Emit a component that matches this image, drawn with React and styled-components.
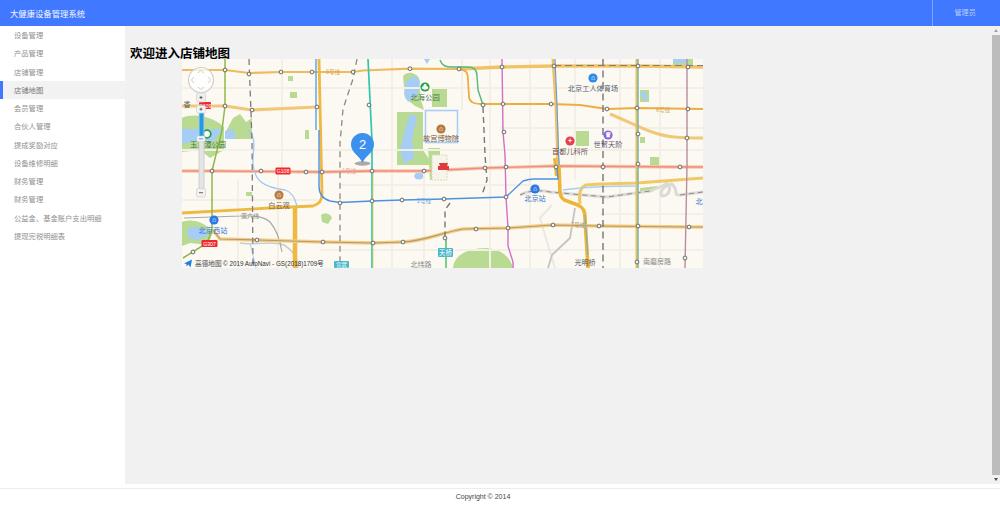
import React from 'react';
import styled, { createGlobalStyle } from 'styled-components';

const FONT = '"Liberation Sans", "Noto Sans CJK SC", sans-serif';
const MAPFONT = '"Noto Sans CJK SC", "Liberation Sans", sans-serif';

const Global = createGlobalStyle`
  html, body { margin: 0; padding: 0; height: 505px; overflow: hidden; background: #fff; }
  body { font-family: ${FONT}; }
  * { box-sizing: border-box; }
`;

const Page = styled.div`
  display: flex;
  flex-direction: column;
  width: 1000px;
  height: 505px;
`;
const Header = styled.header`
  display: flex;
  align-items: center;
  flex: 0 0 26px;
  background: #4079ff;
`;
const Brand = styled.div`
  flex: 1;
  padding-left: 10px;
  font-size: 8.35px;
  color: #f2f6ff;
`;
const UserBox = styled.div`
  width: 68px;
  height: 26px;
  border-left: 1.5px solid #7ea4ff;
  padding-left: 21.5px;
  line-height: 27px;
  font-size: 7.1px;
  color: #b8cdff;
`;
const Main = styled.div`
  display: flex;
  flex: 0 0 458px;
`;
const Sidebar = styled.nav`
  flex: 0 0 125px;
  background: #fff;
`;
const MenuItem = styled.div`
  height: 18.25px;
  line-height: 20px;
  padding-left: ${p => (p.$active ? 11 : 14)}px;
  font-size: 7.3px;
  color: ${p => (p.$active ? '#777' : '#8f8f8f')};
  background: ${p => (p.$active ? '#f2f2f2' : 'transparent')};
  border-left: ${p => (p.$active ? '3px solid #4079ff' : '0')};
`;
const Content = styled.main`
  flex: 1;
  background: #f1f1f1;
  padding: 20px 0 0 5px;
`;
const Title = styled.h1`
  margin: 0;
  font-size: 12.5px;
  line-height: 13px;
  font-weight: 700;
  color: #000;
  font-family: "Noto Sans CJK SC", sans-serif;
`;
const MapFrame = styled.div`
  width: 521px;
  height: 209px;
  margin-left: 52px;
  overflow: hidden;
  background: #fcf9f3;
  svg { display: block; }
`;
const ScrollBar = styled.div`
  display: flex;
  flex-direction: column;
  align-items: stretch;
  flex: 0 0 8px;
  background: #f1f1f1;
`;
const ScrollArrow = styled.div`
  flex: 0 0 9px;
  display: flex;
  align-items: center;
  justify-content: center;
  &::before {
    content: '';
    border-left: 2px solid transparent;
    border-right: 2px solid transparent;
    ${p => (p.$down ? 'border-top: 3px solid #505050;' : 'border-bottom: 3px solid #a3a3a3;')}
  }
`;
const ScrollThumb = styled.div`
  flex: 1;
  background: #bcbcbc;
`;
const Footer = styled.footer`
  margin-top: 4px;
  flex: 0 0 17px;
  border-top: 1px solid #ececec;
  border-bottom: 1px solid #ececec;
  padding-right: 34px;
  text-align: center;
  font-size: 7px;
  line-height: 16px;
  color: #444;
`;

const street = r => ({ d: `M${r[0]} ${r[1]}L${r[2]} ${r[3]}`, c: '#f3efe7', w: 2 });

const ROADS = [
  ...[[182,88,703,88],[182,150,703,150],[500,128,703,128],[340,185,540,185],[182,200,317,200],[600,214,703,214],[320,250,703,250]].map(street),
  ...[[282,59,282,170],[278,170,278,268],[392,59,392,268],[424,170,424,268],[462,59,462,110],[490,59,490,268],[530,59,530,268],[575,59,575,180],[620,59,620,268],[660,59,660,268],[238,180,238,268]].map(street),
  { d: 'M552 205L540 218L545 235L555 268', c: '#ece8e0', w: 2 },
  // grey rail
  { d: 'M520 195C530 190 540 190 550 192L583 195L607 197L650 191C660 187 668 184 666 183C672 186 670 196 662 196C658 190 668 184 672 184C680 192 672 195 680 195L703 192', c: '#dcdad5', w: 3 },
  { d: 'M520 195C530 190 540 190 550 192L583 195L607 197L650 191M680 195L703 192', c: '#8c8c8c', w: 1, dash: '5 4' },
  { d: 'M240 243C250 246 270 240 284 245C295 252 298 260 298 268', c: '#ccc', w: 1.6 },
  { d: 'M184 218L240 216C255 215 265 217 270 222C277 230 280 240 282 252', c: '#a9a9a9', w: 1.2 },
  { d: 'M575 208L570 238L552 255L548 268', c: '#c4c4c4', w: 1.8 },
  // rings
  { d: 'M182 70L225 70L249 73L281 72L353 72L363 70.5L410 68.7L459 69', c: '#eebb5f', w: 2.2 },
  { d: 'M459 69L502 67L554 66L638 66L703 67', c: '#f0c368', w: 3.4 },
  { d: 'M182 106L225 106L252 110L317 107', c: '#f2c878', w: 3.2 },
  { d: 'M459 69C466 70 468 72 468 80L469 97C470 103 475 104 483 104L551 104L580 105L607 109L637 108L703 109', c: '#ecae43', w: 1.8 },
  { d: 'M610 114C625 120 640 128 652 132C668 138 685 138 703 138', c: '#f0c878', w: 3 },
  { d: 'M182 171L212 171L322 172L372 171L424 171L485 168L556 166L680 167L703 167', c: '#f6c8a8', w: 3.4 },
  { d: 'M182 171L212 171L322 172L372 171L424 171L485 168L556 166L680 167L703 167', c: '#ee8e84', w: 1.4 },
  { d: 'M182 213L270 208L313 206C320 204 322 200 322 194L319 59', c: '#eeb942', w: 2.8 },
  { d: 'M295 208V268', c: '#edb93f', w: 4.5 },
  { d: 'M559 167L560 193C561 198 563 200 567 201L578 205C584 208 585 212 585 218L588 268', c: '#eeb433', w: 3.6 },
  { d: 'M556 158L558 176', c: '#eeb433', w: 6 },
  { d: 'M580 204C579 195 579 188 586 185C592 184 600 184 637 183L703 178', c: '#f2c866', w: 3.2 },
  { d: 'M213 230L220 239L257 240L323 242L373 243L403 242C425 241 440 233 463 229L508 228L553 225L599 226L689 227L703 227', c: '#f4cf83', w: 3.5 },
  { d: 'M213 230L220 239L257 240L323 242L373 243L403 242C425 241 440 233 463 229L508 228L553 225L599 226L689 227L703 227', c: '#b69a72', w: 1.2 },
  // metro
  { d: 'M225 59V106L222 130L212 171V230', c: '#8fb947', w: 1.5 },
  { d: 'M212 230L207 243L183 258', c: '#8fb947', w: 1.5 },
  { d: 'M440 60C442 66 446 67 452 67L468 67C474 67 477 70 477 76L478 90L483 105', c: '#52b97a', w: 1.4 },
  { d: 'M368 59L372 141V268', c: '#2fc7ae', w: 1.7 },
  { d: 'M373 170V268', c: '#f2c55e', w: 0.8 },
  { d: 'M502 59L503 132L505 155L506 197L508 228V246L513 262V268', c: '#d56ec5', w: 1.4 },
  { d: 'M553 59L556 105L558 165', c: '#f0c060', w: 3 },
  { d: 'M555 59L557 105L559 165', c: '#5f9ee6', w: 1.1 },
  { d: 'M637 59V268', c: '#efbe4c', w: 3 },
  { d: 'M638 59V268', c: '#56b8dc', w: 1.2 },
  { d: 'M687 59V165L685 268', c: '#b78e9e', w: 1.4 },
  { d: 'M446 238V268', c: '#4cbf6a', w: 1.5 },
  { d: 'M585 215L588 255', c: '#66b2e0', w: 1 },
  { d: 'M319 130V186C319 194 323 199 330 201L340 202.5L372 201L402 200L444 199L506 197L523 181C526 180 530 179 534 179L558 179L557 166', c: '#4d92e0', w: 1.4 },
  { d: 'M316 59V130', c: '#5b9fe8', w: 1.4 },
  { d: 'M248 130C258 140 252 150 253 165C255 180 262 187 285 190C292 192 295 198 297 206', c: '#9dc8f2', w: 1.3 },
  { d: 'M563 190C585 187 610 186 637 186', c: '#a5d0f2', w: 1.4 },
  { d: 'M250 243L256 268', c: '#a5d0f2', w: 1 },
  // dashed
  { d: 'M357 59L353 79L343 109L341 132L340 142V268', c: '#8b8b8b', w: 1.3, dash: '6 4.5' },
  { d: 'M249 59L252 140L253 268', c: '#7d7d7d', w: 1.3, dash: '6 4.5' },
  { d: 'M483 107L485 155L487 180L482 195', c: '#777', w: 1.4, dash: '6 4' },
  { d: 'M450 203L445 210V238', c: '#777', w: 1.4, dash: '6 4' },
  { d: 'M603 59V268', c: '#7e7e7e', w: 1.5, dash: '7 4.5' },
  { d: 'M554 65.5H703', c: '#7e7e7e', w: 1.2, dash: '7 4' },
];

const STATIONS = [
  [225,70],[249,74],[281,72],[312,72],[353,72],[225,106],[252,110],[317,107],[410,68.7],[459,69],[502,67],[554,66],[638,66],[688,67],
  [369,105],[483,105],[503,104],[551,104],[607,109],[637,108],[688,109],[504,132],[638,134],[687,138],
  [212,171],[261,171],[306,172],[322,172],[372,171],[424,171],[485,168],[506,167],[556,167],[603,167],[638,164],[680,167],
  [340,203],[372,201],[402,200],[444,199],[506,197],
  [257,240],[323,242],[373,243],[403,242],[445,238],[476,229],[508,228],[553,225],[599,226],[638,226],[689,227],
  [637,262],[685,258],[193,252],
];

const LABELS = [
  { x: 425, y: 100, t: '北海公园', s: 7.4, c: '#4f7f55' },
  { x: 441, y: 141, t: '故宫博物院', s: 7.2, c: '#7b5f45' },
  { x: 593, y: 91, t: '北京工人体育场', s: 7.2, c: '#4f5e70' },
  { x: 570, y: 154, t: '首都儿科所', s: 7.2, c: '#6d5050' },
  { x: 608, y: 147, t: '世贸天阶', s: 7.2, c: '#5d5670' },
  { x: 279, y: 208, t: '白云观', s: 7.2, c: '#7b5f45' },
  { x: 208, y: 147, t: '玉渊潭公园', s: 7.2, c: '#437a4e' },
  { x: 213, y: 233, t: '北京西站', s: 7.2, c: '#3a76cc' },
  { x: 535, y: 201, t: '北京站', s: 7.2, c: '#3a76cc' },
  { x: 585, y: 265, t: '光明桥', s: 7, c: '#555' },
  { x: 657, y: 264, t: '南磨房路', s: 7, c: '#8a8a8a' },
  { x: 421, y: 267, t: '北纬路', s: 7, c: '#8a8a8a' },
  { x: 250, y: 218, t: '莲六线', s: 6, c: '#8a8a8a' },
  { x: 424, y: 203, t: '2号线', s: 5.5, c: '#6fa3de' },
  { x: 578, y: 227, t: '7号线', s: 5.5, c: '#a99b85' },
  { x: 663, y: 112, t: '6号线', s: 5.5, c: '#d8a64a' },
  { x: 333, y: 74, t: '6号线', s: 5.5, c: '#dba34a' },
  { x: 349, y: 173, t: '1号线', s: 5.5, c: '#e7a79d' },
  { x: 699, y: 204, t: '北', s: 7.2, c: '#3a76cc' },
  { x: 187, y: 107, t: '香', s: 7, c: '#555' },
];

const POIS = [
  { x: 425, y: 87, c: '#27a043', g: '♣' },
  { x: 441, y: 129, c: '#b5793f', g: '⌂' },
  { x: 593, y: 78, c: '#2a8bea', g: '⌂' },
  { x: 570, y: 141, c: '#e6404f', g: '+' },
  { x: 608, y: 135, c: '#8a63dd', g: '♛' },
  { x: 535, y: 189, c: '#2b77e8', g: '⌂' },
  { x: 279, y: 195, c: '#bd7d42', g: '⌂' },
  { x: 214, y: 220, c: '#2b77e8', g: '⌂' },
];

const SHIELDS = [
  { x: 205, y: 105.5, w: 12, c: '#f0282d', t: 'G109' },
  { x: 283, y: 171, w: 15, c: '#f0282d', t: 'G108' },
  { x: 209.5, y: 243.5, w: 16, c: '#f0282d', t: 'G307' },
];

const PARKS = [
  'M403 76C408 70 416 73 419 78L421 100L424 110L415 106L405 98Z',
  'M432 89H447V107H432Z',
  'M397 112H423V150L433 165H397Z',
  'M428 148H440V180H430Z',
  'M182 118C195 112 215 118 224 127L224 150L210 158L200 150L182 152Z',
  'M225 133L233 118L240 114L246 122L252 118V139H225Z',
  'M182 222C192 218 205 222 213 232L208 245L190 243L182 246Z',
  'M453 268C454 255 468 248 486 248C500 249 510 256 513 268Z',
  'M575 131H589V146H575Z',
  'M321 215C325 212 331 214 332 218L328 224L322 222Z',
  'M246 192H252V196H246Z',
  'M650 157H660V166H650Z',
  'M640 137H645V143H640Z',
  'M640 90H649V102H640Z',
  'M288 76H293V81H288Z',
  'M290 92H297V98H290Z',
  'M305 130H309V139H305Z',
  'M640 188L658 186L652 192L640 193Z',
  'M673 59H693V67H673Z',
];

const WATERS = [
  'M406 82C412 74 418 76 420 82L417 96L408 102L404 94Z',
  'M410 114L417 116L412 140L414 158L404 164L400 150L405 130Z',
  'M182 129H223L214 141L195 141L182 144Z',
  'M225 131L233 129L236 139H225Z',
  'M187 229C192 226 202 226 208 231L206 237L196 240L189 238Z',
  'M424 59h6l-3 5z',
  'M640 93l5 -2 3 8 -4 2z',
  'M673 59H687V63H673Z',
];

const CityMap = () => (
  <svg width="521" height="209" viewBox="182 59 521 209" aria-label="店铺地图">
    <rect x="182" y="59" width="521" height="209" fill="#fcf9f3" />
    <g fill="#b9da92">{PARKS.map((d, i) => <path key={i} d={d} />)}</g>
    <g fill="#a6cdf6">
      {WATERS.map((d, i) => <path key={i} d={d} />)}
      <ellipse cx="419" cy="176" rx="5" ry="3.5" />
    </g>
    {ROADS.map((r, i) => (
      <path key={i} d={r.d} fill="none" stroke={r.c} strokeWidth={r.w} strokeDasharray={r.dash} strokeLinejoin="round" />
    ))}
    <rect x="425.5" y="110.5" width="32" height="32" fill="#fcf9f3" stroke="#a9ccf6" strokeWidth="1.6" />
    <rect x="432" y="155" width="15" height="25" fill="#f7f4ec" stroke="#cfe3ab" strokeWidth="1" strokeDasharray="2 1" />
    {STATIONS.map(([x, y], i) => (
      <circle key={i} cx={x} cy={y} r="1.9" fill="#f4f4f0" stroke="#5d5d5d" strokeWidth="0.9" />
    ))}
    {POIS.map((p, i) => (
      <g key={i}>
        <circle cx={p.x} cy={p.y} r="4.6" fill={p.c} />
        <text x={p.x} y={p.y + 2.4} textAnchor="middle" fontSize="7" fontWeight="700" fill="#fff" fontFamily={MAPFONT}>{p.g}</text>
      </g>
    ))}
    <circle cx="207" cy="134" r="3.8" fill="#fff" stroke="#27a043" strokeWidth="1.8" />
    <g textAnchor="middle" fontFamily={MAPFONT}>
      {LABELS.map((l, i) => (
        <text key={i} x={l.x} y={l.y} fontSize={l.s} fill={l.c}>{l.t}</text>
      ))}
    </g>
    <path d="M443 163h-4l1 3h-2v4h11v-4h-2l1 -3z" fill="#e23a3a" />
    {SHIELDS.map((s, i) => (
      <g key={i}>
        <rect x={s.x - s.w / 2} y={s.y - 3.6} width={s.w} height="7.2" rx="1" fill={s.c} />
        <text x={s.x} y={s.y + 2} textAnchor="middle" fontSize="5.2" fill="#fff" fontFamily={FONT}>{s.t}</text>
      </g>
    ))}
    <rect x="438" y="248" width="15" height="9" rx="1" fill="#49b8cb" />
    <text x="445.5" y="255" textAnchor="middle" fontSize="6.4" fill="#fff" fontFamily={MAPFONT}>天桥</text>
    <rect x="334" y="261" width="15" height="7" rx="1" fill="#49b8cb" />
    <text x="341.5" y="267" textAnchor="middle" fontSize="5.6" fill="#fff" fontFamily={MAPFONT}>宣武</text>

    {/* pan control */}
    <circle cx="201" cy="80" r="12.5" fill="#fff" fillOpacity="0.75" stroke="#cfcfcf" strokeWidth="1.2" />
    <path d="M198 73l3 -2.6 3 2.6M198 87l3 2.6 3 -2.6M194 77l-2.6 3 2.6 3M208 77l2.6 3 -2.6 3" fill="none" stroke="#d0d0d0" strokeWidth="1" />
    {/* zoom control */}
    <rect x="199" y="110" width="5" height="84" fill="#e4e4e4" stroke="#c8c8c8" strokeWidth="0.8" />
    <rect x="199.4" y="110" width="4.2" height="28" fill="#1e9be8" />
    <rect x="196.5" y="93" width="9" height="9" rx="1.5" fill="#eee" stroke="#d2d2d2" strokeWidth="0.7" />
    <path d="M199.5 97.5h3M201 96v3" stroke="#555" strokeWidth="0.9" />
    <rect x="196.5" y="105.5" width="9" height="7.5" rx="1.5" fill="#f3f3f3" stroke="#d2d2d2" strokeWidth="0.7" />
    <path d="M199.5 109.2h3M201 107.7v3" stroke="#555" strokeWidth="0.9" />
    <rect x="197" y="136" width="8" height="5.5" rx="1" fill="#f5f5f5" stroke="#cfcfcf" strokeWidth="0.6" />
    <path d="M199 138.8h4" stroke="#4aa3e6" strokeWidth="1" />
    <rect x="196.5" y="188.5" width="9" height="8.5" rx="1.5" fill="#f2f2f2" stroke="#cfcfcf" strokeWidth="0.7" />
    <path d="M199 192.7h4" stroke="#666" strokeWidth="1" />

    {/* logo and copyright */}
    <path d="M184 263.5L192 259.5L190.5 267.5L188.5 264.5L186.5 266.5L186.5 264Z" fill="#1d7fe0" />
    <text x="195" y="265.5" fontSize="6.7" fill="#4a4a4a" fontFamily={MAPFONT}>高德地图</text>
    <text x="223" y="265.5" fontSize="6.3" fill="#333" fontFamily={FONT}>© 2019 AutoNavi - GS(2018)1709号</text>

    {/* marker */}
    <ellipse cx="362.5" cy="163.5" rx="8" ry="2.2" fill="#6b6b6b" fillOpacity="0.55" />
    <path d="M362.5 163C360 156 351 153 351 144.5A11.5 11.5 0 1 1 374 144.5C374 153 365 156 362.5 163Z" fill="#3c90ee" />
    <text x="362.5" y="149" textAnchor="middle" fontSize="13" fill="#fff" fontFamily={FONT}>2</text>
  </svg>
);

const MENU = ['设备管理','产品管理','店铺管理','店铺地图','会员管理','合伙人管理','提成奖励对应','设备维修明细','财务管理','财务管理','公益金、基金账户支出明细','提现完税明细表'];

export default function App() {
  return (
    <>
      <Global />
      <Page>
        <Header>
          <Brand>大健康设备管理系统</Brand>
          <UserBox>管理员</UserBox>
        </Header>
        <Main>
          <Sidebar>
            {MENU.map((m, i) => (
              <MenuItem key={i} $active={i === 3}>{m}</MenuItem>
            ))}
          </Sidebar>
          <Content>
            <Title>欢迎进入店铺地图</Title>
            <MapFrame><CityMap /></MapFrame>
          </Content>
          <ScrollBar aria-hidden="true">
            <ScrollArrow />
            <ScrollThumb />
            <ScrollArrow $down />
          </ScrollBar>
        </Main>
        <Footer>Copyright © 2014</Footer>
      </Page>
    </>
  );
}
